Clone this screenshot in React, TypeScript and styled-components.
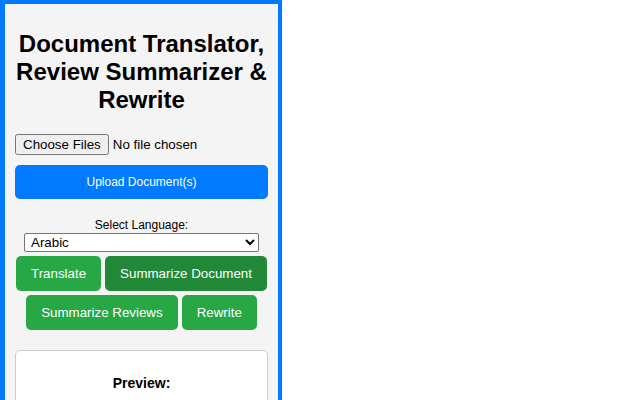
import React, { useState } from "react";
import styled, { createGlobalStyle } from "styled-components";

const GlobalStyle = createGlobalStyle`
  body {
    margin: 0;
    background: #ffffff;
    font-family: "Liberation Sans", Arial, sans-serif;
  }
`;

const languages = ["Arabic", "English", "French", "German", "Spanish", "Hindi"];

const App: React.FC = () => {
  const [language, setLanguage] = useState<string>("Arabic");
  const [active] = useState<string>("summarizeDoc");

  const actions = [
    { id: "translate", label: "Translate" },
    { id: "summarizeDoc", label: "Summarize Document" },
    { id: "summarizeReviews", label: "Summarize Reviews" },
    { id: "rewrite", label: "Rewrite" },
  ];

  return (
    <>
      <GlobalStyle />
      <Panel>
        <Title>Document Translator, Review Summarizer &amp; Rewrite</Title>
        <FileRow>
          <FileInput type="file" multiple />
        </FileRow>
        <UploadButton>Upload Document(s)</UploadButton>
        <LanguageBlock>
          <LanguageLabel htmlFor="lang">Select Language:</LanguageLabel>
          <LanguageSelect
            id="lang"
            value={language}
            onChange={(e) => setLanguage(e.target.value)}
          >
            {languages.map((lang) => (
              <option key={lang} value={lang}>
                {lang}
              </option>
            ))}
          </LanguageSelect>
        </LanguageBlock>
        <ActionRow>
          {actions.map((action) => (
            <ActionButton key={action.id} $active={action.id === active}>
              {action.label}
            </ActionButton>
          ))}
        </ActionRow>
        <PreviewCard>
          <PreviewTitle>Preview:</PreviewTitle>
        </PreviewCard>
      </Panel>
    </>
  );
};

export default App;

const Panel = styled.div`
  width: 282px;
  min-height: 420px;
  box-sizing: border-box;
  background-color: #f4f4f4;
  border: 4px solid #007bff;
  border-left-width: 5px;
  padding: 10px;
`;

const Title = styled.h1`
  font-size: 24px;
  line-height: 28px;
  font-weight: bold;
  text-align: center;
  color: #000000;
  margin: 16px 0 20px;
`;

const FileRow = styled.div`
  height: 21px;
  display: flex;
  align-items: center;
`;

const FileInput = styled.input`
  font-family: "Liberation Sans", Arial, sans-serif;
  font-size: 13.33px;
  color: #000000;
`;

const UploadButton = styled.button`
  display: block;
  width: 100%;
  margin-top: 10px;
  height: 34px;
  border: none;
  border-radius: 5px;
  background-color: #007bff;
  color: #ffffff;
  font-family: "Liberation Sans", Arial, sans-serif;
  font-size: 12px;
  cursor: pointer;
`;

const LanguageBlock = styled.div`
  margin-top: 19px;
  display: flex;
  flex-direction: column;
  align-items: center;
`;

const LanguageLabel = styled.label`
  font-size: 12px;
  line-height: 14px;
  color: #000000;
`;

const LanguageSelect = styled.select`
  width: 235px;
  height: 19px;
  margin-top: 1px;
  font-family: "Liberation Sans", Arial, sans-serif;
  font-size: 13.33px;
  color: #000000;
  background: #ffffff;
  border: 1px solid #767676;
  border-radius: 2px;
  padding: 0 2px;
`;

const ActionRow = styled.div`
  margin-top: 4px;
  display: flex;
  flex-wrap: wrap;
  justify-content: center;
  gap: 4px;
`;

const ActionButton = styled.button<{ $active?: boolean }>`
  padding: 10px 15px;
  line-height: 15px;
  border: none;
  border-radius: 5px;
  background-color: ${(p) => (p.$active ? "#218838" : "#28a745")};
  color: #ffffff;
  font-family: "Liberation Sans", Arial, sans-serif;
  font-size: 13.33px;
  cursor: pointer;
`;

const PreviewCard = styled.div`
  margin-top: 20px;
  background: #ffffff;
  border: 1px solid #cccccc;
  border-radius: 5px;
  padding: 24px 15px 15px;
  min-height: 80px;
`;

const PreviewTitle = styled.h3`
  margin: 0;
  font-size: 14px;
  line-height: 16px;
  font-weight: bold;
  text-align: center;
  color: #000000;
`;
